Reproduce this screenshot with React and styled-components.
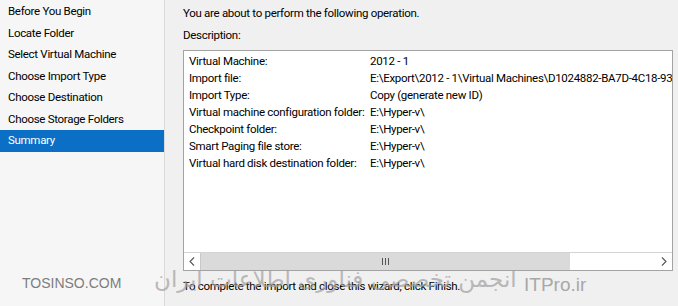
import React from 'react';
import styled, { createGlobalStyle } from 'styled-components';

const GlobalStyle = createGlobalStyle`
  html, body {
    margin: 0;
    padding: 0;
    background: #f0f0f0;
  }
  body {
    font-family: Roboto, "Noto Sans", sans-serif;
    font-size: 11.5px;
    letter-spacing: -0.3px;
    color: #000;
  }
`;

const Wizard = styled.div`
  position: relative;
  width: 678px;
  height: 306px;
  display: grid;
  grid-template-columns: 165px 1fr;
  overflow: hidden;
  background: #f0f0f0;
`;

const StepList = styled.ul`
  list-style: none;
  margin: 0;
  padding: 1px 0 0 0;
  background: #f6f6f6;
  border-right: 1px solid #dadada;
`;

const Step = styled.li`
  height: 21.5px;
  line-height: 21px;
  padding-left: 8px;
  white-space: nowrap;
  background: ${({ active }) => (active ? '#0b6fc6' : 'transparent')};
  color: ${({ active }) => (active ? '#fff' : '#000')};
`;

const Main = styled.div`
  display: flex;
  flex-direction: column;
  padding: 4px 5px 0 18px;
`;

const Intro = styled.p`
  margin: 0;
  line-height: 18px;
`;

const Label = styled.p`
  margin: 4px 0 0 0;
  line-height: 18px;
`;

const DetailBox = styled.div`
  margin-top: 6px;
  height: 221px;
  box-sizing: border-box;
  background: #fff;
  border: 1px solid #a3a3a3;
  display: flex;
  flex-direction: column;
`;

const DetailGrid = styled.div`
  flex: 1;
  display: grid;
  grid-template-columns: 181px 1fr;
  grid-auto-rows: 17px;
  align-content: start;
  padding: 2px 0 0 5px;
  overflow: hidden;
  white-space: nowrap;
  line-height: 17px;
`;

const Cell = styled.span`
  overflow: hidden;
`;

const HScroll = styled.div`
  height: 17px;
  border-top: 1px solid #d4d4d4;
  display: grid;
  grid-template-columns: 16px 1fr 16px;
  background: #fff;
`;

const Arrow = styled.div`
  display: flex;
  align-items: center;
  justify-content: center;
`;

const Track = styled.div`
  display: flex;
`;

const Thumb = styled.div`
  background: #dadada;
  border-left: 1px solid #c8c8c8;
  display: flex;
  align-items: center;
  justify-content: center;
`;

const Grip = styled.span`
  display: flex;
  gap: 2px;
  span {
    width: 1px;
    height: 7px;
    background: #555;
  }
`;

const Footer = styled.p`
  margin: 6px 0 0 0;
  line-height: 18px;
`;

const Watermark = styled.span`
  position: absolute;
  white-space: nowrap;
  pointer-events: none;
  letter-spacing: 0;
  color: ${({ tone }) => tone || '#8a8a8a'};
  font-family: ${({ family }) => family || '"Liberation Sans", sans-serif'};
  font-size: ${({ size }) => size}px;
  left: ${({ x }) => x}px;
  top: ${({ y }) => y}px;
  opacity: ${({ fade }) => fade || 1};
`;

const steps = [
  'Before You Begin',
  'Locate Folder',
  'Select Virtual Machine',
  'Choose Import Type',
  'Choose Destination',
  'Choose Storage Folders',
  'Summary',
];

const details = [
  ['Virtual Machine:', '2012 - 1'],
  ['Import file:', 'E:\\Export\\2012 - 1\\Virtual Machines\\D1024882-BA7D-4C18-930A-5F2E'],
  ['Import Type:', 'Copy (generate new ID)'],
  ['Virtual machine configuration folder:', 'E:\\Hyper-v\\'],
  ['Checkpoint folder:', 'E:\\Hyper-v\\'],
  ['Smart Paging file store:', 'E:\\Hyper-v\\'],
  ['Virtual hard disk destination folder:', 'E:\\Hyper-v\\'],
];

const Chevron = ({ dir }) => (
  <svg width="6" height="9" viewBox="0 0 6 9">
    <path
      d={dir === 'left' ? 'M5 0.5 L1 4.5 L5 8.5' : 'M1 0.5 L5 4.5 L1 8.5'}
      fill="none"
      stroke="#555"
      strokeWidth="1.1"
    />
  </svg>
);

export default function App() {
  return (
    <>
      <GlobalStyle />
      <Wizard>
        <StepList>
          {steps.map((s) => (
            <Step key={s} active={s === 'Summary'}>{s}</Step>
          ))}
        </StepList>
        <Main>
          <Intro>You are about to perform the following operation.</Intro>
          <Label>Description:</Label>
          <DetailBox>
            <DetailGrid>
              {details.map(([k, v]) => (
                <React.Fragment key={k}>
                  <Cell>{k}</Cell>
                  <Cell>{v}</Cell>
                </React.Fragment>
              ))}
            </DetailGrid>
            <HScroll>
              <Arrow><Chevron dir="left" /></Arrow>
              <Track>
                <Thumb style={{ width: '369px' }}>
                  <Grip><span /><span /><span /></Grip>
                </Thumb>
              </Track>
              <Arrow><Chevron dir="right" /></Arrow>
            </HScroll>
          </DetailBox>
          <Footer>To complete the import and close this wizard, click Finish.</Footer>
        </Main>
        <Watermark x={22} y={275} size={14} tone="#7d7d7d">TOSINSO.COM</Watermark>
        <Watermark x={154} y={266} size={23} tone="#a0a0a0" fade={0.7} family='"DejaVu Sans", sans-serif' dir="rtl">
          انجمن تخصصی فناوری اطلاعات ایران
        </Watermark>
        <Watermark x={524} y={274} size={19} tone="#a8a8a8">ITPro.ir</Watermark>
      </Wizard>
    </>
  );
}
